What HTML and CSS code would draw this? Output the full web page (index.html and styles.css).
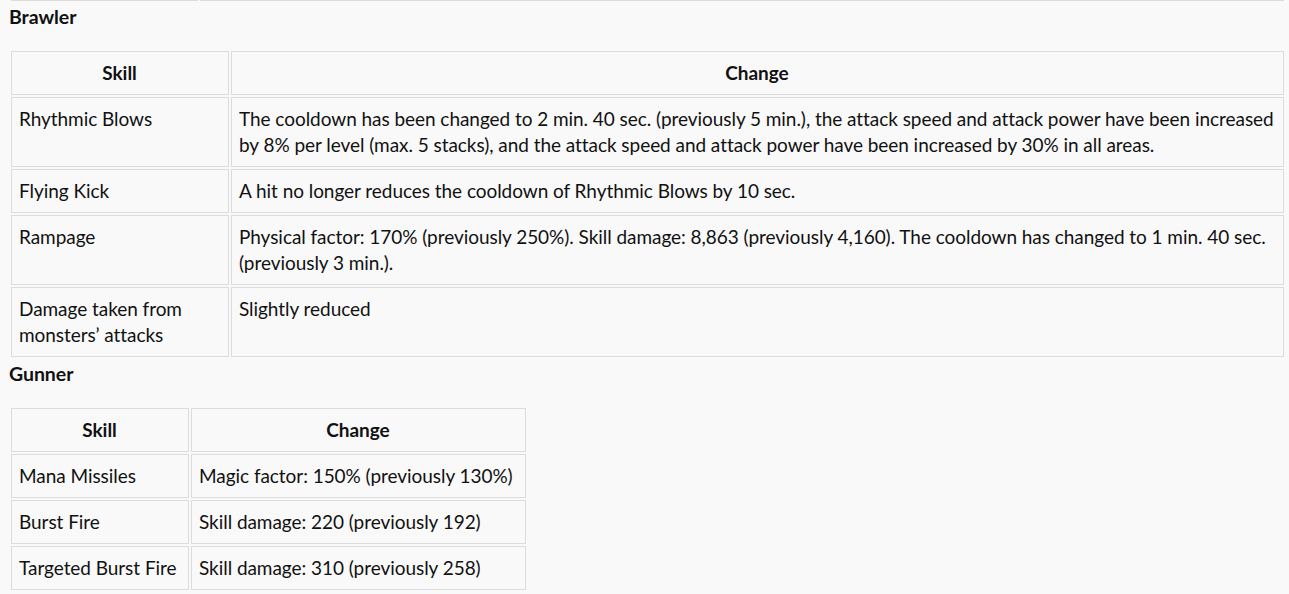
FILE: index.html
```html
<!DOCTYPE html>
<html>
<head>
<meta charset="utf-8">
<link rel="stylesheet" href="styles.css">
</head>
<body>
<div class="page">
  <div class="prev-end">
    <div class="prev-cell prev-c1"></div>
    <div class="prev-cell prev-c2"></div>
  </div>
  <p class="heading">Brawler</p>
  <table class="skills full">
    <thead>
      <tr><th class="col-skill">Skill</th><th>Change</th></tr>
    </thead>
    <tbody>
      <tr><td>Rhythmic Blows</td><td>The cooldown has been changed to 2 min. 40 sec. (previously 5 min.), the attack speed and attack power have been increased by 8% per level (max. 5 stacks), and the attack speed and attack power have been increased by 30% in all areas.</td></tr>
      <tr><td>Flying Kick</td><td>A hit no longer reduces the cooldown of Rhythmic Blows by 10 sec.</td></tr>
      <tr><td>Rampage</td><td>Physical factor: 170% (previously 250%). Skill damage: 8,863 (previously 4,160). The cooldown has changed to 1 min. 40 sec. (previously 3 min.).</td></tr>
      <tr><td>Damage taken from monsters’ attacks</td><td>Slightly reduced</td></tr>
    </tbody>
  </table>
  <p class="heading">Gunner</p>
  <table class="skills">
    <thead>
      <tr><th class="g-skill">Skill</th><th class="g-change">Change</th></tr>
    </thead>
    <tbody>
      <tr><td>Mana Missiles</td><td>Magic factor: 150% (previously 130%)</td></tr>
      <tr><td>Burst Fire</td><td>Skill damage: 220 (previously 192)</td></tr>
      <tr><td>Targeted Burst Fire</td><td>Skill damage: 310 (previously 258)</td></tr>
    </tbody>
  </table>
</div>
</body>
</html>
```
FILE: styles.css
```css
html, body {
  margin: 0;
  padding: 0;
  background: #f9f9f9;
}
body {
  font-family: Lato, "Noto Sans", sans-serif;
  font-size: 19px;
  letter-spacing: -0.05px;
  color: #111;
}
.page {
  padding: 0 3px 0 9px;
}
.prev-end {
  display: flex;
  gap: 2px;
  padding: 0 2px 1px 2px;
}
.prev-cell {
  height: 0;
  border-bottom: 1px solid #dcdcdc;
}
.prev-c1 {
  width: 187px;
}
.prev-c2 {
  flex: 1;
}
.heading {
  margin: 0 0 17px 0;
  font-weight: bold;
  line-height: 30px;
  font-size: 19.5px;
}
.skills {
  border-collapse: separate;
  border-spacing: 2px;
}
.skills.full {
  width: 100%;
}
.skills th,
.skills td {
  border: 1px solid #dcdcdc;
  padding: 8px 8px 8px 7px;
  line-height: 26px;
  vertical-align: top;
  text-align: left;
}
.skills th {
  text-align: center;
  font-weight: bold;
}
.col-skill {
  width: 201px;
}
.g-skill {
  width: 161px;
}
.g-change {
  width: 318px;
}
```
